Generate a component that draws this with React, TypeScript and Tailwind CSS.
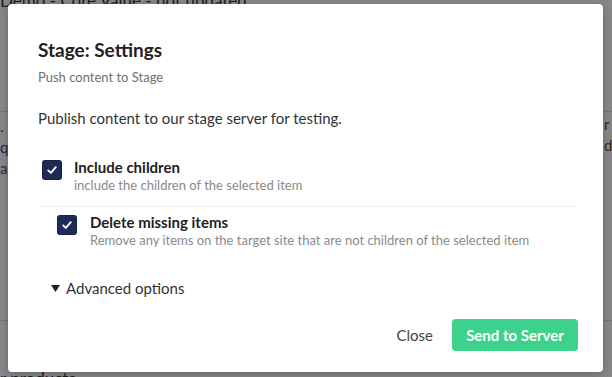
import React from 'react';

const Check = () => (
  <span className="w-[18px] h-[18px] bg-[#1e2b58] rounded-[2px] flex items-center justify-center shrink-0 shadow-[0_0_0_1px_#16204a]">
    <svg width="12" height="12" viewBox="0 0 12 12" fill="none">
      <path d="M2.2 6.4 L4.8 8.9 L9.8 3.2" stroke="#fff" strokeWidth="1.9" strokeLinecap="round" strokeLinejoin="round" />
    </svg>
  </span>
);

export default function App() {
  return (
    <div className="relative w-[612px] h-[377px] overflow-hidden bg-[#878787]" style={{ fontFamily: 'Lato, "Noto Sans", sans-serif' }}>
      {/* page behind the overlay */}
      <div className="absolute left-0 top-[-12px] text-[17px] text-[#1c1c1c] whitespace-nowrap">Demo - Core Value - not updated</div>
      <div className="absolute left-0 right-0 top-[111px] h-px bg-[#757575]" />
      <div className="absolute left-0 right-0 top-[320px] h-px bg-[#757575]" />
      <div className="absolute left-0 top-[116px] text-[15px] leading-[21px] text-[#2a2350]">
        <div>. s</div>
        <div>qu</div>
        <div>ac</div>
      </div>
      <div className="absolute left-[604px] top-[114px] text-[15px] leading-[21px] text-[#3a2a10]">
        <div>r</div>
        <div>d</div>
      </div>
      <div className="absolute left-[0px] top-[366px] text-[17px] text-[#1c1c1c] whitespace-nowrap">r products</div>

      {/* modal */}
      <div className="absolute left-[8px] top-[4px] w-[595px] h-[368px] bg-white rounded-[4px] shadow-[0_2px_8px_rgba(0,0,0,0.25)] pl-[30px] pr-[25px] pt-[34px] flex flex-col">
        <h2 className="text-[19px] leading-[24px] font-bold text-[#222]">Stage: Settings</h2>
        <p className="mt-[7px] text-[13px] leading-[17px] text-[#6f6f6f]">Push content to Stage</p>
        <p className="mt-[22px] text-[15px] leading-[20px] text-[#333]">Publish content to our stage server for testing.</p>

        <div className="mt-[29px] flex">
          <div className="w-[36px] pl-[5px] pt-[4px]">
            <Check />
          </div>
          <div>
            <div className="text-[15px] leading-[20px] font-bold text-[#222]">Include children</div>
            <div className="text-[13px] leading-[17px] text-[#8a8a8a]">include the children of the selected item</div>
          </div>
        </div>

        <div className="mt-[12px] h-px bg-[#ececec]" />

        <div className="mt-[5px] flex pl-[15px]">
          <div className="w-[37px] pl-[5px] pt-[4px]">
            <Check />
          </div>
          <div>
            <div className="text-[15px] leading-[20px] font-bold text-[#222]">Delete missing items</div>
            <div className="text-[13px] leading-[17px] text-[#8a8a8a]">Remove any items on the target site that are not children of the selected item</div>
          </div>
        </div>

        <div className="mt-[29px] flex items-center pl-[13px] text-[15px] leading-[20px] text-[#333]">
          <svg width="9" height="7" viewBox="0 0 9 7" className="mr-[6px]">
            <path d="M0 0 H9 L4.5 7 Z" fill="#222" />
          </svg>
          Advanced options
        </div>

        <div className="mt-[21px] flex justify-end items-center gap-[19px]">
          <button className="text-[15px] text-[#444]">Close</button>
          <button className="h-[32px] w-[126px] rounded-[4px] bg-[#3dd28c] text-white text-[15px] font-bold">Send to Server</button>
        </div>
      </div>
    </div>
  );
}
